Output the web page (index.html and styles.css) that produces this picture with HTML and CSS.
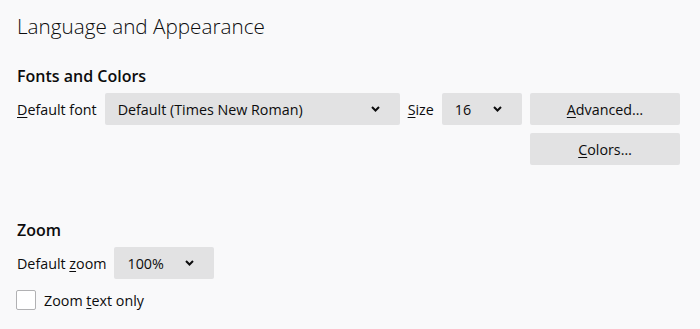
FILE: index.html
```html
<!DOCTYPE html>
<html lang="en">
<head>
  <meta charset="UTF-8" />
  <title>Language and Appearance</title>
  <link rel="stylesheet" href="styles.css">
</head>
<body>

  <div class="pane">
    <h1>Language and Appearance</h1>

    <section class="group fonts">
      <h2>Fonts and Colors</h2>
      <div class="row">
        <label><u>D</u>efault font</label>
        <div class="select font-select">
          <span>Default (Times New Roman)</span>
          <svg class="chev" width="9" height="6" viewBox="0 0 9 6"><path d="M1 1l3.5 3.5L8 1" fill="none" stroke="#0c0c0d" stroke-width="2"/></svg>
        </div>
        <label><u>S</u>ize</label>
        <div class="select size-select">
          <span>16</span>
          <svg class="chev" width="9" height="6" viewBox="0 0 9 6"><path d="M1 1l3.5 3.5L8 1" fill="none" stroke="#0c0c0d" stroke-width="2"/></svg>
        </div>
        <button><u>A</u>dvanced…</button>
      </div>
      <div class="row end">
        <button><u>C</u>olors…</button>
      </div>
    </section>

    <section class="group zoom">
      <h2>Zoom</h2>
      <div class="row">
        <label>Default <u>z</u>oom</label>
        <div class="select zoom-select">
          <span>100%</span>
          <svg class="chev" width="9" height="6" viewBox="0 0 9 6"><path d="M1 1l3.5 3.5L8 1" fill="none" stroke="#0c0c0d" stroke-width="2"/></svg>
        </div>
      </div>
      <label class="check">
        <span class="box"></span>
        <span>Zoom <u>t</u>ext only</span>
      </label>
    </section>
  </div>

</body>
</html>
```

FILE: styles.css
```css
* {
  box-sizing: border-box;
}

body {
  margin: 0;
  background: #f9f9fa;
  color: #0c0c0d;
  font-family: 'Open Sans', sans-serif;
  font-size: 14.3px;
}

.pane {
  padding: 11px 20px 0 17px;
}

h1 {
  margin: 0;
  font-size: 20.7px;
  font-weight: 300;
  line-height: 30px;
}

h2 {
  margin: 0 0 6px;
  font-size: 16px;
  font-weight: 600;
  line-height: 22px;
}

.fonts {
  margin-top: 24px;
}

.zoom {
  margin-top: 54px;
}

.row {
  display: flex;
  align-items: center;
  gap: 8px;
}

.row.end {
  justify-content: flex-end;
  margin-top: 8px;
}

u {
  text-decoration-thickness: 1px;
  text-underline-offset: 2px;
}

.select {
  display: flex;
  align-items: center;
  justify-content: space-between;
  height: 32px;
  padding: 0 12px 0 13px;
  background: #e2e2e3;
  border-radius: 2px;
}

.font-select {
  width: 295px;
}

.size-select {
  width: 80px;
}

.zoom-select {
  width: 100px;
}

.chev {
  margin-right: 8px;
}

button {
  width: 150px;
  height: 32px;
  margin-left: auto;
  border: none;
  border-radius: 2px;
  background: #e2e2e3;
  color: #0c0c0d;
  font-family: inherit;
  font-size: 14.3px;
}

.check {
  display: flex;
  align-items: center;
  gap: 8px;
  margin-top: 11px;
  margin-left: -1px;
}

.box {
  width: 20px;
  height: 20px;
  background: #fff;
  border: 1px solid #b1b1b3;
  border-radius: 2px;
}
```
